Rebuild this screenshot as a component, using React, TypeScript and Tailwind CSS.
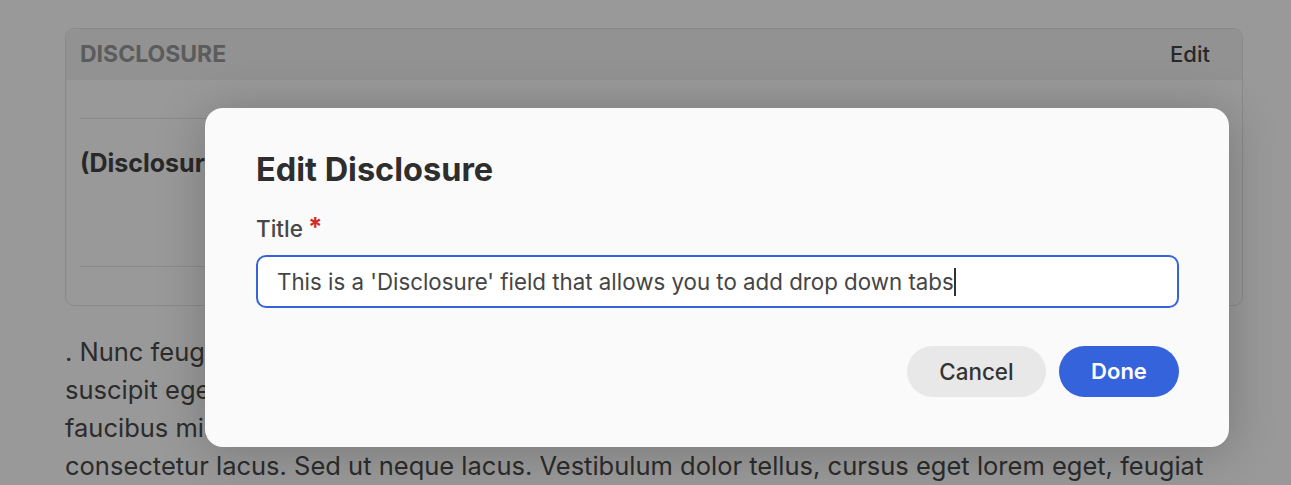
import React from "react";

export default function App() {
  return (
    <div
      className="relative w-[1291px] h-[485px] overflow-hidden bg-white"
      style={{ fontFamily: "Inter, 'Noto Sans', sans-serif" }}
    >
      {/* page content */}
      <div className="pl-[65px] pr-[48px] pt-[28px]">
        <div className="rounded-[9px] border border-[#e6e6e6] overflow-hidden">
          <div className="flex items-center justify-between h-[51px] bg-[#f4f4f4] pl-[14px] pr-[32px]">
            <span className="text-[23px] font-bold text-[#999999]">DISCLOSURE</span>
            <span className="text-[22px] font-medium text-[#444444]">Edit</span>
          </div>
          <div className="px-[14px]">
            <div className="h-[39px] border-b border-[#e6e6e6]" />
            <div className="h-[148px] border-b border-[#e6e6e6] pt-[27px]">
              <span className="text-[25px] leading-[34px] font-bold text-[#444444]">(Disclosure)</span>
            </div>
            <div className="h-[38px]" />
          </div>
        </div>
        <div className="mt-[27px] text-[25.5px] leading-[38px] text-[#4a4a4a] whitespace-nowrap">
          <div>. Nunc feugiat ligula a nisl gravida, non placerat</div>
          <div>suscipit eget nunc. Curabitur convallis metus</div>
          <div>faucibus mi. Integer tristique, nulla at lacinia</div>
          <div>consectetur lacus. Sed ut neque lacus. Vestibulum dolor tellus, cursus eget lorem eget, feugiat</div>
        </div>
      </div>

      {/* overlay */}
      <div className="absolute inset-0 bg-black/40" />

      {/* modal */}
      <div className="absolute left-[205px] top-[108px] w-[1024px] rounded-[18px] bg-[#fafafa] shadow-[0_4px_50px_rgba(0,0,0,0.22)] pl-[51px] pr-[50px] pt-[44px] pb-[50px]">
        <h2 className="text-[32.5px] leading-[36px] font-bold text-[#2e2e2e]">Edit Disclosure</h2>
        <div className="mt-[27px] flex items-start h-[28px]">
          <span className="text-[22.5px] leading-[28px] font-medium text-[#474747]">Title</span>
          <span className="ml-[5px] text-[26px] leading-[24px] font-bold text-[#d42a2a]">*</span>
        </div>
        <div className="mt-[12px] h-[53px] rounded-[10px] border-2 border-[#3563db] bg-white flex items-center pl-[19px]">
          <span className="text-[22.3px] text-[#454545]">This is a 'Disclosure' field that allows you to add drop down tabs</span>
          <span className="w-[2px] h-[28px] bg-[#333333]" />
        </div>
        <div className="mt-[38px] flex justify-end gap-[13px]">
          <button className="w-[139px] h-[51px] rounded-full bg-[#e8e8e8] text-[22.4px] font-medium text-[#333333]">
            Cancel
          </button>
          <button className="w-[120px] h-[51px] rounded-full bg-[#3563db] text-[22px] font-semibold text-white">
            Done
          </button>
        </div>
      </div>
    </div>
  );
}
